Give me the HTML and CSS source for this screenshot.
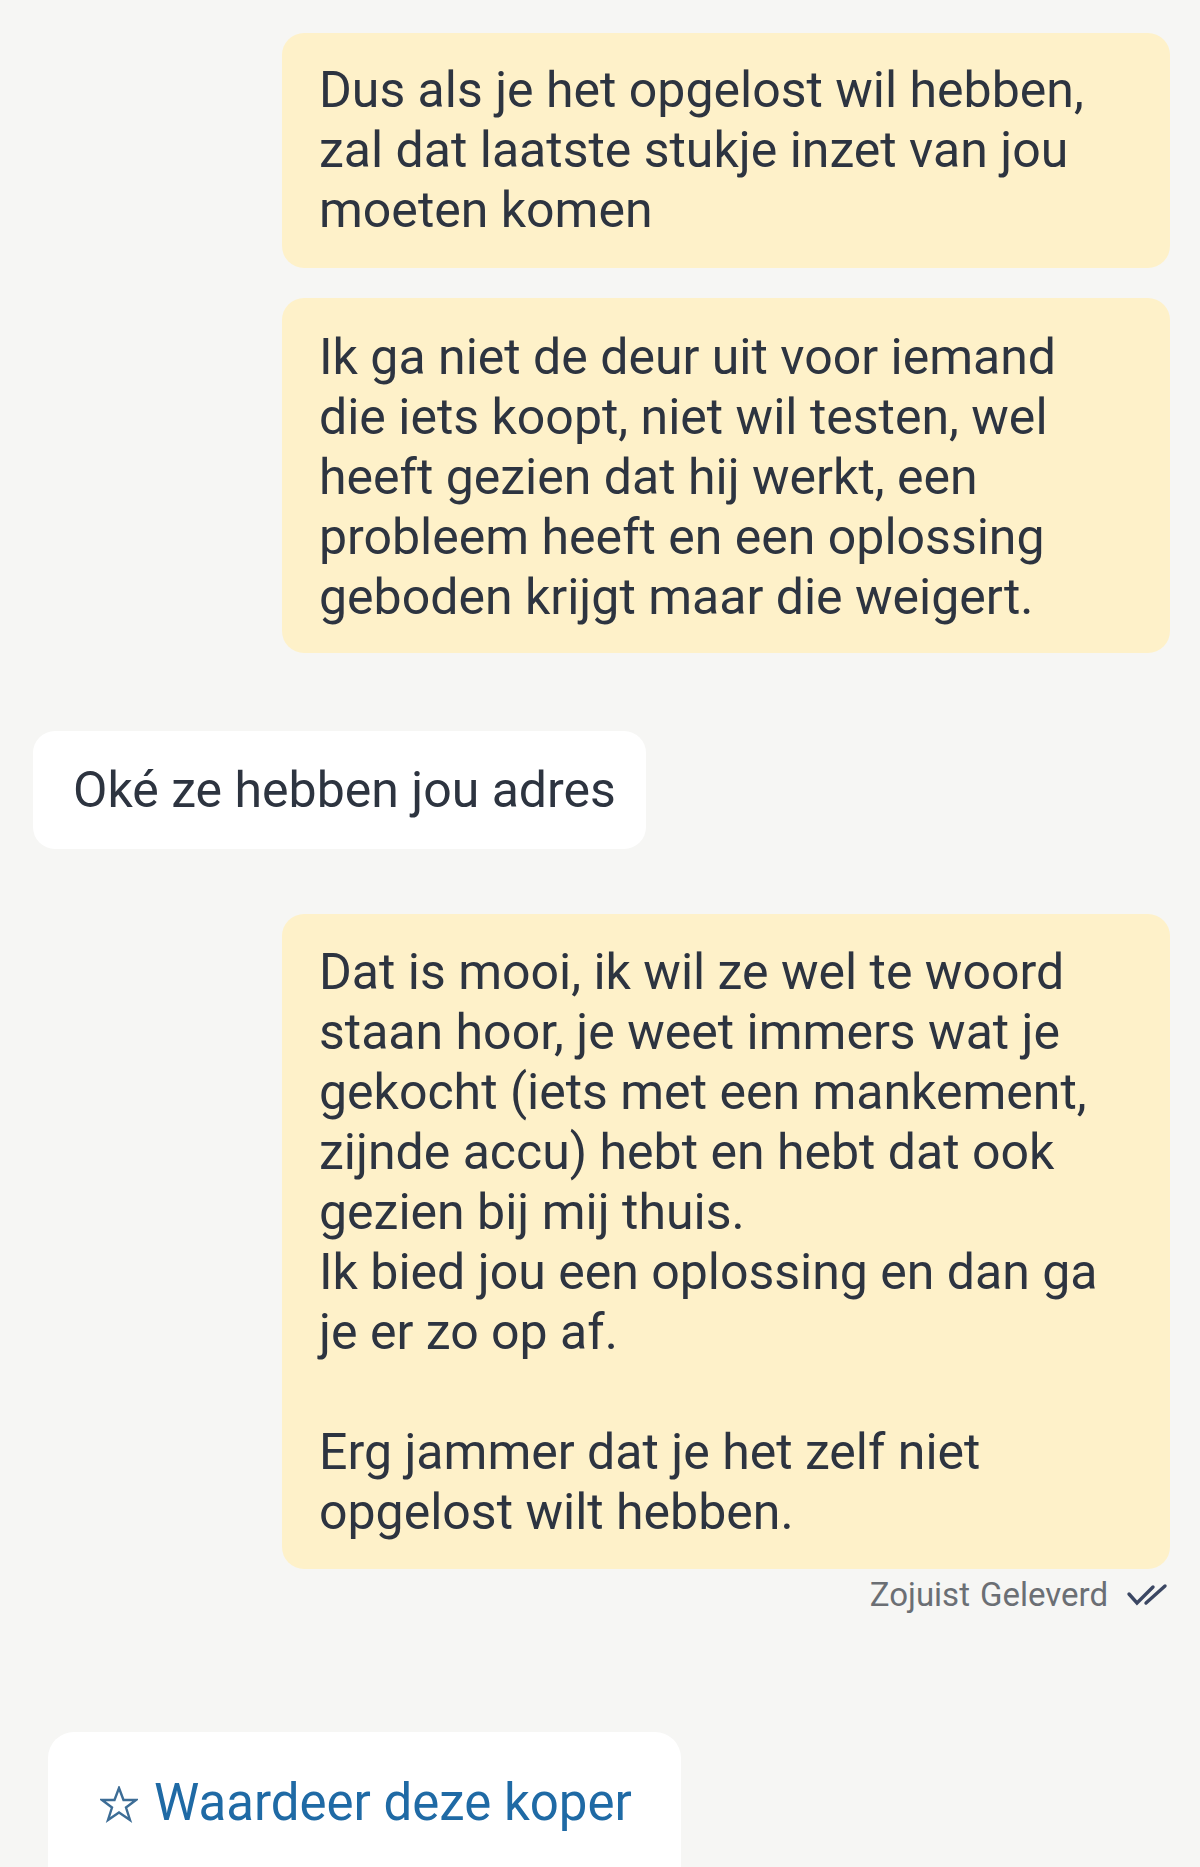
FILE: index.html
```html
<!DOCTYPE html>
<html lang="nl">
<head>
    <meta charset="utf-8">
    <title>Berichten</title>
    <link rel="stylesheet" href="styles.css">
</head>
<body>
<div class="thread">
    <div class="msg mine">Dus als je het opgelost wil hebben, zal dat laatste stukje inzet van jou moeten komen</div>
    <div class="msg mine second">Ik ga niet de deur uit voor iemand die iets koopt, niet wil testen, wel heeft gezien dat hij werkt, een probleem heeft en een oplossing geboden krijgt maar die weigert.</div>
    <div class="msg theirs">Oké ze hebben jou adres</div>
    <div class="msg mine last">Dat is mooi, ik wil ze wel te woord staan hoor, je weet immers wat je gekocht (iets met een mankement, zijnde accu) hebt en hebt dat ook gezien bij mij thuis.<br>Ik bied jou een oplossing en dan ga je er zo op af.<br><br>Erg jammer dat je het zelf niet opgelost wilt hebben.</div>
    <div class="status">
        <span>Zojuist</span><span>Geleverd</span>
        <svg class="ticks" width="44" height="26" viewBox="0 0 44 26">
            <path d="M3 12 L11 21 L27 5" fill="none" stroke="#3b4763" stroke-width="3.4" stroke-linecap="round"/>
            <path d="M20 21 L39 4" fill="none" stroke="#3b4763" stroke-width="3.4" stroke-linecap="round"/>
        </svg>
    </div>
</div>
<div class="rate">
    <svg class="star" width="38" height="38" viewBox="0 0 38 38">
        <polygon points="19,2 23.5,14 36,14 26,21.5 30,34 19,26.5 8,34 12,21.5 2,14 14.5,14" fill="none" stroke="#3d6d96" stroke-width="2.4"/>
    </svg>
    <span>Waardeer deze koper</span>
</div>
</body>
</html>
```

FILE: styles.css
```css
html, body { margin: 0; padding: 0; }
body { background: #f6f6f4; font-family: Roboto, "Noto Sans", sans-serif; color: #2d3440; width: 1200px; height: 1867px; overflow: hidden; }
.thread { display: flex; flex-direction: column; padding: 33px 30px 0 33px; }
.msg { font-size: 50px; line-height: 60px; border-radius: 22px; box-sizing: border-box; }
.mine { background: #fef1c9; align-self: flex-end; width: 888px; padding: 27px 58px 28px 37px; }
.mine.second { margin-top: 30px; padding-top: 29px; padding-bottom: 26px; }
.theirs { background: #fff; align-self: flex-start; margin-top: 78px; padding: 29px 30px 29px 40px; }
.mine.last { margin-top: 65px; padding-top: 28px; padding-bottom: 27px; }
.status { align-self: flex-end; display: flex; align-items: center; gap: 10px; margin-top: 6px; font-size: 33px; color: #6b6f74; }
.ticks { margin-left: 8px; }
.rate { margin: 118px 0 0 48px; width: 633px; height: 200px; background: #fff; border-radius: 26px; box-sizing: border-box; padding: 26px 0 0 52px; display: flex; align-items: flex-start; gap: 16px; font-size: 51px; color: #1f6aa5; }
.rate span { line-height: 90px; }
.star { margin-top: 28px; }
```
